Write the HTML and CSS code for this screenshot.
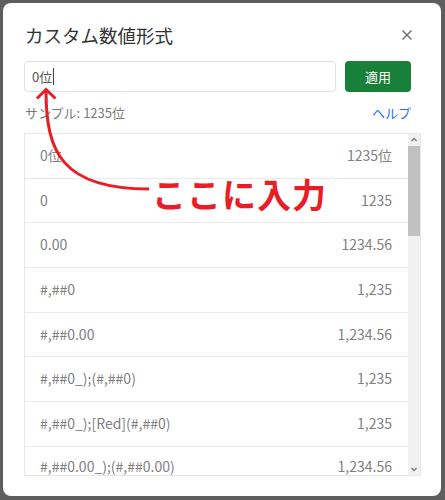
FILE: index.html
```html
<!DOCTYPE html>
<html lang="ja">
<head>
<meta charset="utf-8">
<link rel="stylesheet" href="styles.css">
</head>
<body>
<div class="dialog">
  <div class="header">
    <div class="title">カスタム数値形式</div>
    <svg class="close" width="12" height="12" viewBox="0 0 12 12"><path d="M1.5 1.5L10.5 10.5M10.5 1.5L1.5 10.5" stroke="#6b6b6b" stroke-width="1.4" fill="none"/></svg>
  </div>
  <div class="input-row">
    <div class="input"><span class="value">0位</span><span class="caret"></span></div>
    <div class="btn">適用</div>
  </div>
  <div class="sample-row">
    <span class="sample">サンプル: 1235位</span>
    <span class="help">ヘルプ</span>
  </div>
  <div class="list">
    <div class="rows">
      <div class="row"><span>0位</span><span>1235位</span></div>
      <div class="row"><span>0</span><span>1235</span></div>
      <div class="row"><span>0.00</span><span>1234.56</span></div>
      <div class="row"><span>#,##0</span><span>1,235</span></div>
      <div class="row"><span>#,##0.00</span><span>1,234.56</span></div>
      <div class="row"><span>#,##0_);(#,##0)</span><span>1,235</span></div>
      <div class="row"><span>#,##0_);[Red](#,##0)</span><span>1,235</span></div>
      <div class="row last"><span>#,##0.00_);(#,##0.00)</span><span>1,234.56</span></div>
    </div>
    <div class="scrollbar">
      <svg class="arrow" width="12" height="12" viewBox="0 0 12 12"><path d="M3.5 7L6 4.5L8.5 7" stroke="#777" stroke-width="1.3" fill="none"/></svg>
      <div class="thumb"></div>
      <div class="track"></div>
      <svg class="arrow" width="12" height="12" viewBox="0 0 12 12"><path d="M3.5 5L6 7.5L8.5 5" stroke="#777" stroke-width="1.3" fill="none"/></svg>
    </div>
  </div>
</div>
<svg class="annot" width="445" height="500" viewBox="0 0 445 500">
  <path d="M46 91 C 46 152 62 189 149 189" stroke="#e81d25" stroke-width="3" fill="none"/>
  <path d="M37 98.5 L46 89.5 L55.5 98.5" stroke="#e81d25" stroke-width="3" fill="none" stroke-linejoin="miter"/>
</svg>
<div class="annot-text">ここに入力</div>
</body>
</html>
```
FILE: styles.css
```css
html, body {
  margin: 0;
  padding: 0;
}
body {
  width: 445px;
  height: 500px;
  background: #5e5e5e;
  font-family: "Noto Sans CJK JP", "Noto Sans", sans-serif;
  position: relative;
  overflow: hidden;
}
.dialog {
  position: absolute;
  left: 3px;
  top: 3px;
  width: 438px;
  height: 493px;
  box-sizing: border-box;
  padding: 18px 20px 20px 21px;
  background: #fff;
  border-radius: 8px;
  display: flex;
  flex-direction: column;
}
.header {
  height: 28px;
  display: flex;
  align-items: center;
  justify-content: space-between;
  margin-bottom: 12px;
}
.title {
  font-size: 18.5px;
  color: #333;
  line-height: 28px;
  padding-left: 1px;
}
.close {
  margin-right: 8px;
}
.input-row {
  display: flex;
  gap: 9px;
  margin-right: 10px;
  height: 31px;
}
.input {
  flex: 1;
  box-sizing: border-box;
  border: 1px solid #dfdfdf;
  border-radius: 4px;
  display: flex;
  align-items: center;
  padding-left: 7px;
  font-size: 13px;
  color: #555;
}
.caret {
  display: inline-block;
  width: 1px;
  height: 17px;
  background: #444;
  margin-left: 1px;
}
.btn {
  width: 66px;
  box-sizing: border-box;
  background: #188038;
  border-radius: 4px;
  color: #fff;
  font-size: 13px;
  display: flex;
  align-items: center;
  justify-content: center;
}
.sample-row {
  margin-top: 10px;
  margin-right: 10px;
  height: 20px;
  display: flex;
  justify-content: space-between;
  align-items: center;
  font-size: 13px;
}
.sample {
  color: #7a7a7a;
  padding-left: 1px;
}
.help {
  color: #1a73e8;
}
.list {
  margin-top: 11px;
  flex: 1;
  border: 1px solid #e6e6e6;
  display: flex;
  overflow: hidden;
  min-height: 0;
}
.rows {
  flex: 1;
  overflow: hidden;
}
.row {
  height: 44.7px;
  box-sizing: border-box;
  border-bottom: 1px solid #ebebeb;
  display: flex;
  align-items: center;
  justify-content: space-between;
  padding: 0 16px 2px 15px;
  font-size: 14px;
  line-height: 14px;
  color: #808080;
}
.row.last {
  padding-bottom: 6px;
}
.scrollbar {
  width: 12px;
  background: #f1f1f1;
  display: flex;
  flex-direction: column;
}
.arrow {
  display: block;
  flex: none;
}
.thumb {
  height: 90px;
  background: #c1c1c1;
  flex: none;
}
.track {
  flex: 1;
}
.annot {
  position: absolute;
  left: 0;
  top: 0;
}
.annot-text {
  position: absolute;
  left: 152px;
  top: 177px;
  font-size: 34px;
  line-height: 34px;
  font-weight: 700;
  color: #e81d25;
  letter-spacing: 1px;
}
```
